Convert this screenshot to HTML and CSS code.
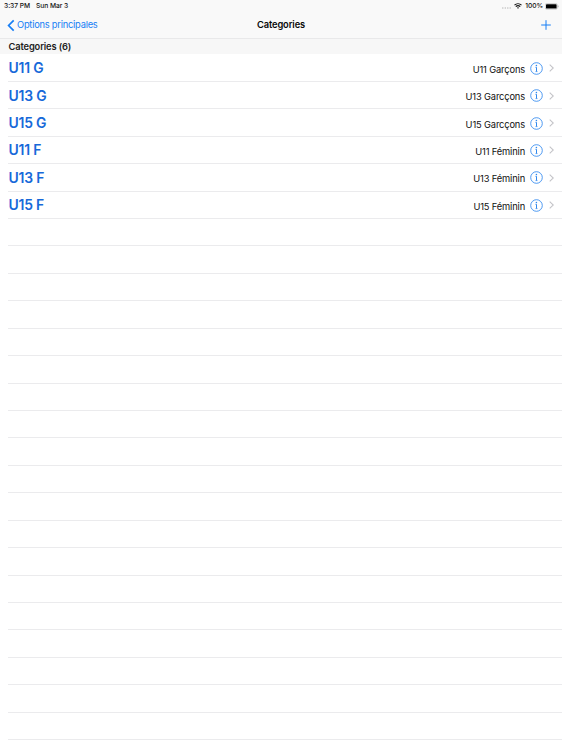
FILE: index.html
```html
<!DOCTYPE html>
<html lang="fr">
<head>
<meta charset="utf-8">
<title>Categories</title>
<link rel="stylesheet" href="styles.css">
</head>
<body>
<header class="top">
  <div class="status">
    <span class="time">3:37 PM</span><span class="date">Sun Mar 3</span>
    <div class="indicators">
      <svg class="dots" width="9" height="2" viewBox="0 0 9 2"><path d="M.2 1h1.2M2.7 1h1.2M5.2 1h1.2M7.6 1h1.2" stroke="#aaa" stroke-width="1"/></svg>
      <svg class="wifi" width="8" height="6" viewBox="0 0 8 6"><path d="M.5 2.2C2.5.2 5.5.2 7.5 2.2M1.8 3.6c1.3-1.2 3.1-1.2 4.4 0" fill="none" stroke="#111" stroke-width="1.1"/><path d="M2.9 4.7Q4 3.8 5.1 4.7L4 5.8z" fill="#111"/></svg>
      <span class="percent">100%</span>
      <svg class="battery" width="14" height="7" viewBox="0 0 14 7"><rect x=".3" y=".5" width="12" height="5.8" rx="1.4" fill="#fff" stroke="#aaa" stroke-width=".5"/><rect x="1" y="1.2" width="10.6" height="4.4" rx=".7" fill="#000"/><path d="M13.1 2.5v1.8" stroke="#999" stroke-width=".7"/></svg>
    </div>
  </div>
  <nav class="bar">
    <a class="back"><svg width="8" height="13" viewBox="0 0 8 13"><path d="M6.7 1.3 1.6 6.5l5.1 5.2" fill="none" stroke="#177ef5" stroke-width="1.7"/></svg><span class="back-label">Options principales</span></a>
    <h1 class="title">Categories</h1>
    <svg class="add" width="10" height="10" viewBox="0 0 10 10"><path d="M5 .2v9.6M.2 5h9.6" stroke="#177ef5"/></svg>
  </nav>
</header>
<h2 class="section"><span class="section-label">Categories (6)</span></h2>
<svg class="symbols"><defs>
  <g id="info" fill="none" stroke="#2f88ee"><circle cx="6.5" cy="6.5" r="5.8" stroke-width=".85"/><path d="M5.5 5.3h1v4.3" stroke-width="1"/><path d="M5.4 9.6h2.2" stroke-width=".6"/><circle cx="6.4" cy="3.5" r=".8" fill="#2f88ee" stroke="none"/></g>
  <path id="next" d="M.7.7 4.3 4 .7 7.3" fill="none" stroke="#c3c3c7" stroke-width="1.1"/>
</defs></svg>
<ul class="list">
  <li class="row"><span class="name">U11 G</span><span class="detail">U11 Garçons</span><svg class="info" width="13" height="13"><use href="#info"/></svg><svg class="next" width="5" height="8"><use href="#next"/></svg></li>
  <li class="row"><span class="name">U13 G</span><span class="detail">U13 Garcçons</span><svg class="info" width="13" height="13"><use href="#info"/></svg><svg class="next" width="5" height="8"><use href="#next"/></svg></li>
  <li class="row"><span class="name">U15 G</span><span class="detail">U15 Garcçons</span><svg class="info" width="13" height="13"><use href="#info"/></svg><svg class="next" width="5" height="8"><use href="#next"/></svg></li>
  <li class="row"><span class="name">U11 F</span><span class="detail">U11 Féminin</span><svg class="info" width="13" height="13"><use href="#info"/></svg><svg class="next" width="5" height="8"><use href="#next"/></svg></li>
  <li class="row"><span class="name">U13 F</span><span class="detail">U13 Féminin</span><svg class="info" width="13" height="13"><use href="#info"/></svg><svg class="next" width="5" height="8"><use href="#next"/></svg></li>
  <li class="row"><span class="name">U15 F</span><span class="detail">U15 Féminin</span><svg class="info" width="13" height="13"><use href="#info"/></svg><svg class="next" width="5" height="8"><use href="#next"/></svg></li>
  <li class="row"></li><li class="row"></li><li class="row"></li><li class="row"></li><li class="row"></li>
  <li class="row"></li><li class="row"></li><li class="row"></li><li class="row"></li><li class="row"></li>
  <li class="row"></li><li class="row"></li><li class="row"></li><li class="row"></li><li class="row"></li>
  <li class="row"></li><li class="row"></li><li class="row"></li><li class="row"></li>
</ul>
</body>
</html>
```
FILE: styles.css
```css
* { box-sizing: border-box; }
body { margin: 0; height: 750px; overflow: hidden; background: #fff; color: #111; font-family: Inter, "Liberation Sans", sans-serif; }
svg { display: block; flex: none; }
h1, h2, ul { margin: 0; padding: 0; }
.top { height: 39px; background: #f9f9f9; border-bottom: 1px solid #e9e9ea; }
.status { display: flex; align-items: center; height: 12px; padding: 0 3px 0 4px; font-size: 6.7px; font-weight: 500; line-height: 12px; letter-spacing: -.06px; }
.date { margin-left: 6px; }
.indicators { display: flex; align-items: center; margin-left: auto; }
.dots { margin: 3px 3px 0 0; }
.percent { margin: 0 2px 0 3px; }
.bar { display: grid; grid-template-columns: 1fr auto 1fr; align-items: center; height: 26px; padding: 0 11px 0 7px; }
.back { display: flex; align-items: center; gap: 2px; color: #177ef5; font-size: 9.3px; line-height: 14px; white-space: nowrap; letter-spacing: -.23px; }
.title { font-size: 9.3px; font-weight: 600; line-height: 14px; letter-spacing: -.1px; transform: translateX(2px); color: #080808; }
.add { justify-self: end; }
.section { display: flex; align-items: center; height: 15px; padding-left: 8.5px; background: #f7f7f7; font-size: 9.3px; font-weight: 600; line-height: 15px; letter-spacing: -.12px; color: #222; }
.symbols { position: absolute; width: 0; height: 0; }
.list { list-style: none; padding: .5px 0 0 8px; }
.row { display: flex; align-items: center; height: 27.43px; padding: 1px 8px 0 0; border-bottom: 1px solid #ebebed; }
.name { padding-left: .5px; color: #1769d9; font-size: 13.9px; font-weight: 600; line-height: 20px; letter-spacing: -.2px; white-space: nowrap; }
.detail { margin-left: auto; padding-top: 3px; font-size: 9.3px; line-height: 14px; letter-spacing: -.14px; white-space: nowrap; }
.info { margin-left: 5px; }
.next { margin-left: 6px; }
```
